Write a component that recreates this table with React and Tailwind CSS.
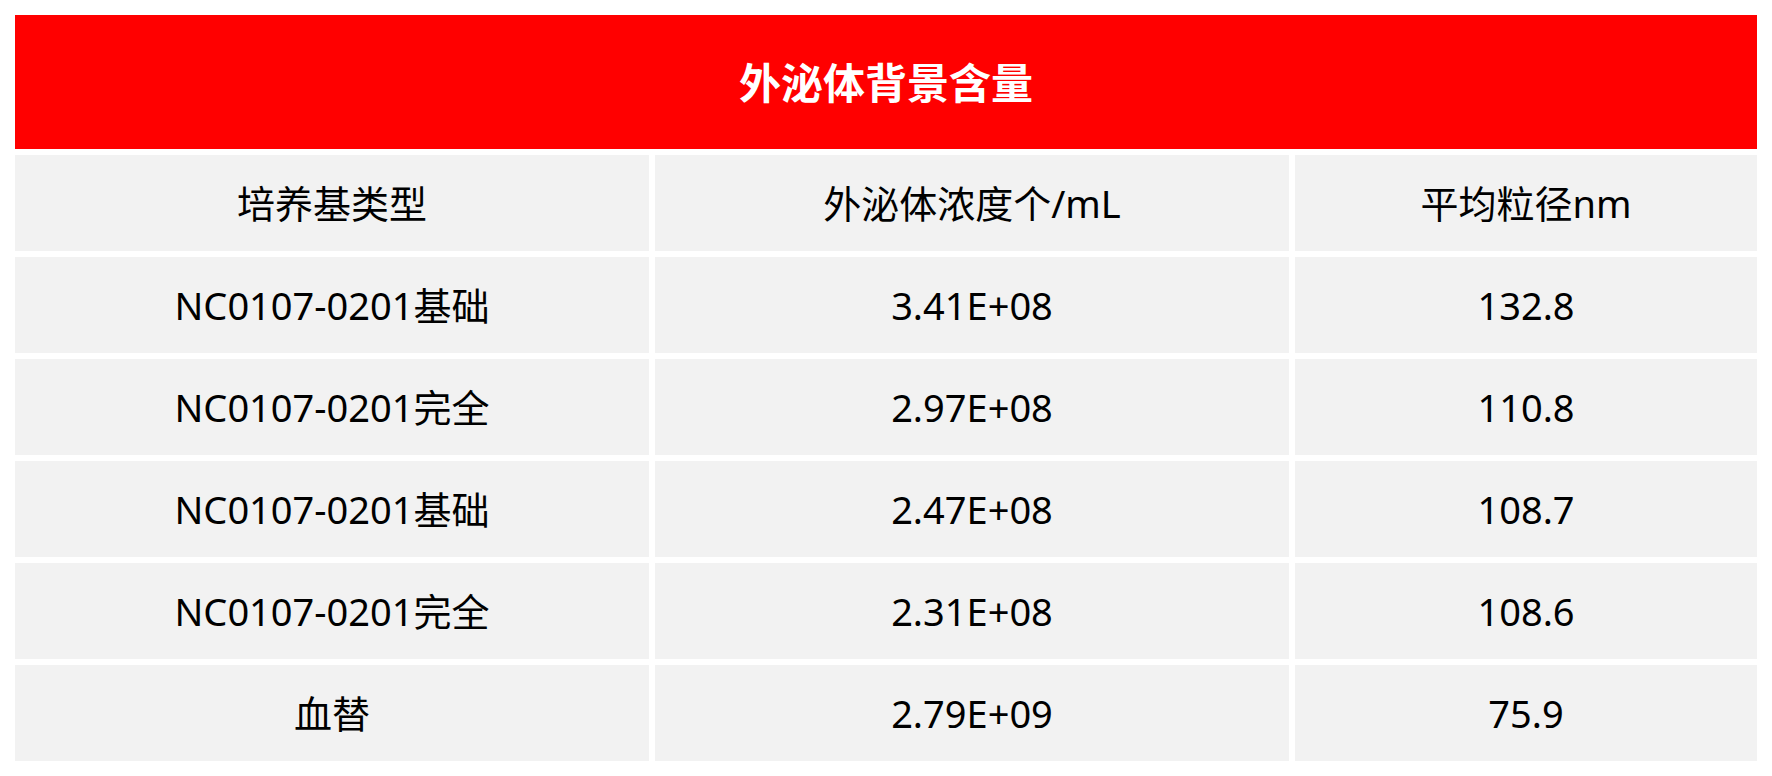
const rows = [
  ["NC0107-0201基础", "3.41E+08", "132.8"],
  ["NC0107-0201完全", "2.97E+08", "110.8"],
  ["NC0107-0201基础", "2.47E+08", "108.7"],
  ["NC0107-0201完全", "2.31E+08", "108.6"],
  ["血替", "2.79E+09", "75.9"],
];

const head = ["培养基类型", "外泌体浓度个/mL", "平均粒径nm"];

function Cell({ children }) {
  return (
    <div className="flex h-[96px] items-center justify-center bg-[#f2f2f2] text-[38px] leading-none text-black">
      {children}
    </div>
  );
}

export default function App() {
  return (
    <div
      className="min-h-screen bg-white pl-[15px] pt-[15px]"
      style={{ fontFamily: '"Noto Sans", "Noto Sans CJK SC", sans-serif' }}
    >
      <div className="flex w-[1742px] flex-col gap-[6px]">
        <div className="flex h-[134px] items-center justify-center bg-[#ff0000] text-[42px] font-bold text-white">
          外泌体背景含量
        </div>
        <div className="grid grid-cols-[634px_634px_462px] gap-[6px]">
          {head.map((h) => (
            <Cell key={h}>{h}</Cell>
          ))}
          {rows.map((r, i) =>
            r.map((v, j) => <Cell key={`${i}-${j}`}>{v}</Cell>)
          )}
        </div>
      </div>
    </div>
  );
}
